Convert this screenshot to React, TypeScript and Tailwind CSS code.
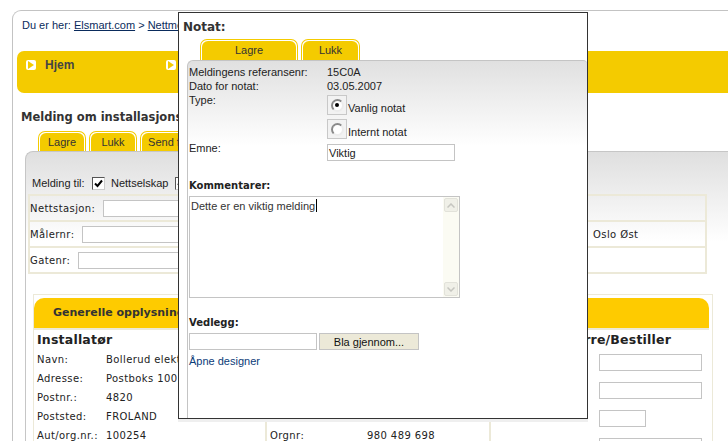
import React from 'react'

const dv = "font-['DejaVu_Sans',sans-serif]"

function NavIcon() {
  return (
    <span className="mt-[1px] flex h-[10px] w-[10px] items-center justify-center rounded-[2px] bg-white">
      <svg width="6" height="8" viewBox="0 0 6 8">
        <path d="M0 0 L6 4 L0 8 Z" fill="#f4cb00" />
      </svg>
    </span>
  )
}

function Tab({ label, className }: { label: string; className: string }) {
  return (
    <div className={`${className} rounded-t-[7px] border border-b-0 border-[#f4cb00] bg-white px-[1px] pt-[1px]`}>
      <div className="flex h-full items-center justify-center rounded-t-[6px] bg-[#f4cb00] font-['Liberation_Sans',sans-serif] text-[11px] text-[#333]">
        {label}
      </div>
    </div>
  )
}

function CheckBox() {
  return (
    <span className="flex h-[13px] w-[13px] items-center justify-center border border-t-[#555] border-l-[#555] border-r-[#ccc] border-b-[#ccc] bg-white">
      <svg width="9" height="9" viewBox="0 0 9 9">
        <path d="M1 4.5 L3.5 7 L8 1.5" fill="none" stroke="#000" strokeWidth="2" />
      </svg>
    </span>
  )
}

function Radio({ checked }: { checked?: boolean }) {
  return (
    <span className="flex h-[20px] w-[20px] items-center justify-center border border-[#c8c8c8] bg-[#f2f2f2]">
      <span className="flex h-[13px] w-[13px] items-center justify-center rounded-full border-2 border-t-[#8a8a8a] border-l-[#8a8a8a] border-r-[#ececec] border-b-[#ececec] bg-white">
        {checked && <span className="h-[4px] w-[4px] rounded-full bg-black" />}
      </span>
    </span>
  )
}

const input = 'h-[17px] border border-[#c4c4c4] bg-white'

export default function App() {
  const navItems = ['Hjem', 'Meldinger', 'Rapporter', 'Admin']
  const installer = [
    ['Navn:', 'Bollerud elektro AS'],
    ['Adresse:', 'Postboks 100'],
    ['Postnr.:', '4820'],
    ['Poststed:', 'FROLAND'],
    ['Aut/org.nr.:', '100254'],
  ]
  const owner = [
    ['Firma:', 'Nettselskap AS'],
    ['Adresse:', 'Postboks 22'],
    ['Postnr.:', '0601'],
    ['Poststed:', 'OSLO'],
    ['Orgnr:', '980 489 698'],
  ]

  return (
    <div className={`relative h-[441px] w-[728px] overflow-hidden bg-white ${dv}`}>
      {/* page frame */}
      <div className="ml-[12px] mt-[10px] h-[431px] rounded-tl-[9px] border-l border-t border-[#c3c3c3]">
        <div className="h-[40px] pl-[9px] pt-[7px] font-['Liberation_Sans',sans-serif] text-[11px] leading-[14px] text-[#0a2b5c]">
          Du er her: <span className="underline">Elsmart.com</span> &gt;{' '}
          <span className="underline">Nettmelding</span>
        </div>

        {/* nav */}
        <div className="ml-[4px] flex h-[42px] rounded-l-[7px] bg-[#f4cb00] pl-[9px] pt-[8px]">
          {navItems.map((n) => (
            <div key={n} className="flex w-[140px] items-start gap-[9px]">
              <NavIcon />
              <span className="font-['Liberation_Sans',sans-serif] text-[12px] font-bold leading-[12px] text-[#444]">{n}</span>
            </div>
          ))}
        </div>

        <div className="mt-[16px] pl-[8px] text-[11.5px] font-bold leading-[16px] text-[#333]">
          Melding om installasjonsarbeid
        </div>

        <div className="ml-[25px] mt-[6px] flex h-[20px] gap-[3px]">
          <Tab label="Lagre" className="w-[48px]" />
          <Tab label="Lukk" className="w-[48px]" />
          <Tab label="Send forespørsel" className="w-[100px]" />
        </div>

        {/* main panel */}
        <div className="ml-[12px] h-[300px] rounded-tl-[8px] border-l border-t border-[#c6c6c6] bg-[linear-gradient(to_bottom,#dfdfdf,#ffffff_90px)]">
          <div className="mt-[25px] flex h-[13px] items-center pl-[6px] font-['Liberation_Sans',sans-serif] text-[11px] text-[#222]">
            <span className="w-[60px]">Melding til:</span>
            <CheckBox />
            <span className="ml-[6px] w-[64px]">Nettselskap</span>
            <CheckBox />
            <span className="ml-[6px]">Installatør</span>
          </div>

          <div className="ml-[2px] mt-[4px] w-[679px] border-t-2 border-[#ece9d8] text-[10px] tracking-[0.4px] text-[#222]">
            <div className="flex h-[26px] items-center border-x-2 border-b-2 border-[#ece9d8]">
              <span className="w-[73px]">Nettstasjon:</span>
              <span className={`${input} w-[200px]`} />
            </div>
            <div className="flex h-[26px] items-center border-x-2 border-b-2 border-[#ece9d8]">
              <span className="w-[52px]">Målernr:</span>
              <span className={`${input} w-[200px]`} />
              <span className="ml-auto w-[112px]">Oslo Øst</span>
            </div>
            <div className="flex h-[26px] items-center border-x-2 border-b-2 border-[#ece9d8]">
              <span className="w-[48px]">Gatenr:</span>
              <span className={`${input} w-[200px]`} />
            </div>
          </div>

          {/* general info */}
          <div className="ml-[7px] mt-[20px] w-[680px] border border-[#ece9d8] pr-[3px] pt-[3px]">
            <div className="flex h-[30px] items-center rounded-t-[10px] bg-[#fecb00] pl-[19px] text-[11px] font-bold text-[#333]">
              Generelle opplysninger
            </div>
            <div className="grid grid-cols-[231px_224px_222px] border-t-2 border-[#ece9d8] text-[10px] tracking-[0.4px] text-[#222]">
              <div className="pl-[3px] pt-[2px]">
                <div className="text-[12.5px] font-bold leading-[16px] tracking-[0.2px] text-[#222]">Installatør</div>
                <div className="mt-[2px]">
                  {installer.map(([k, v]) => (
                    <div key={k} className="flex h-[19px] items-center">
                      <span className="w-[69px]">{k}</span>
                      <span>{v}</span>
                    </div>
                  ))}
                </div>
              </div>
              <div className="border-l-2 border-[#ece9d8] pl-[3px] pt-[2px]">
                <div className="text-[12.5px] font-bold leading-[16px]">Nettselskap</div>
                <div className="mt-[2px]">
                  {owner.map(([k, v]) => (
                    <div key={k} className="flex h-[19px] items-center">
                      <span className="w-[97px]">{k}</span>
                      <span>{v}</span>
                    </div>
                  ))}
                </div>
              </div>
              <div className="border-l-2 border-[#ece9d8] pt-[2px]">
                <div className="pl-[6px] text-[12.5px] font-bold leading-[16px] tracking-[0.2px]">Eier/Byggherre/Bestiller</div>
                <div className="mt-[6px]">
                  {[['Navn:', 'w-[103px]'], ['Adresse:', 'w-[103px]'], ['Postnr.:', 'w-[47px]'], ['Poststed:', 'w-[103px]']].map(([k, w]) => (
                    <div key={k} className="flex h-[28px] items-start">
                      <span className="w-[108px] pl-[2px]">{k}</span>
                      <span className={`${input} ${w}`} />
                    </div>
                  ))}
                </div>
              </div>
            </div>
          </div>
        </div>
      </div>

      {/* Notat dialog */}
      <div className="absolute left-[178px] top-[12px] flex h-[407px] w-[410px] flex-col border border-[#333] bg-white shadow-[0_3px_0_#efefef]">
        <div className="pl-[4px] pt-[6px] text-[12px] font-bold leading-[16px] text-[#333]">Notat:</div>
        <div className="ml-[21px] mt-[4px] flex h-[21px] gap-[3px]">
          <Tab label="Lagre" className="w-[98px]" />
          <Tab label="Lukk" className="w-[59px]" />
        </div>
        <div className="ml-[8px] flex-1 rounded-tl-[6px] rounded-tr-[4px] border-l border-t border-[#c4c4c4] bg-[linear-gradient(to_bottom,#e0e0e0,#ffffff_85px)] pl-[1px] pt-[4px] font-['Liberation_Sans',sans-serif] text-[11px] leading-[14px] text-[#222]">
          <div className="flex">
            <span className="w-[138px]">Meldingens referansenr:</span>
            <span>15C0A</span>
          </div>
          <div className="flex">
            <span className="w-[138px]">Dato for notat:</span>
            <span>03.05.2007</span>
          </div>
          <div className="flex">
            <span className="w-[138px]">Type:</span>
            <div className="flex flex-col">
              <div className="mt-[2px] flex items-end">
                <Radio checked />
                <span className="ml-[1px] leading-[14px]">Vanlig notat</span>
              </div>
              <div className="mt-[4px] flex items-end">
                <Radio />
                <span className="ml-[1px] leading-[14px]">Internt notat</span>
              </div>
            </div>
          </div>
          <div className="mt-[2px] flex">
            <span className="w-[138px]">Emne:</span>
            <span className="mt-[3px] flex h-[17px] w-[128px] items-center border border-[#c4c4c4] bg-white pl-[1px]">Viktig</span>
          </div>

          <div className={`mt-[18px] ${dv} text-[10px] font-bold leading-[14px] text-[#222]`}>Kommentarer:</div>
          <div className="mt-[3px] flex h-[102px] w-[271px] border border-[#c4c4c4] bg-white">
            <div className="flex-1 pl-[1px] pt-0 text-[#333]">
              Dette er en viktig melding<span className="ml-[1px] inline-block h-[13px] w-[1px] translate-y-[2px] bg-black" />
            </div>
            <div className="flex w-[16px] flex-col justify-between bg-[#fbfbf3] px-[1px] py-[1px]">
              <span className="flex h-[14px] items-center justify-center rounded-[2px] border border-[#e2e2da] bg-[#f0f0e8]">
                <svg width="8" height="5" viewBox="0 0 8 5"><path d="M0.5 4.5 L4 1 L7.5 4.5" fill="none" stroke="#c6c6c0" strokeWidth="1.5" /></svg>
              </span>
              <span className="flex h-[14px] items-center justify-center rounded-[2px] border border-[#e2e2da] bg-[#f0f0e8]">
                <svg width="8" height="5" viewBox="0 0 8 5"><path d="M0.5 0.5 L4 4 L7.5 0.5" fill="none" stroke="#c6c6c0" strokeWidth="1.5" /></svg>
              </span>
            </div>
          </div>

          <div className={`mt-[18px] ${dv} text-[10px] font-bold leading-[14px] text-[#222]`}>Vedlegg:</div>
          <div className="mt-[3px] flex">
            <span className="h-[17px] w-[128px] border border-[#c4c4c4] bg-white" />
            <span className="ml-[2px] flex h-[17px] w-[100px] items-center justify-center border border-[#c4c4c4] bg-[#ece9d8] text-[11px] text-[#111]">
              Bla gjennom...
            </span>
          </div>
          <div className="mt-[4px] text-[#0b3b78]">Åpne designer</div>
        </div>
      </div>
    </div>
  )
}
